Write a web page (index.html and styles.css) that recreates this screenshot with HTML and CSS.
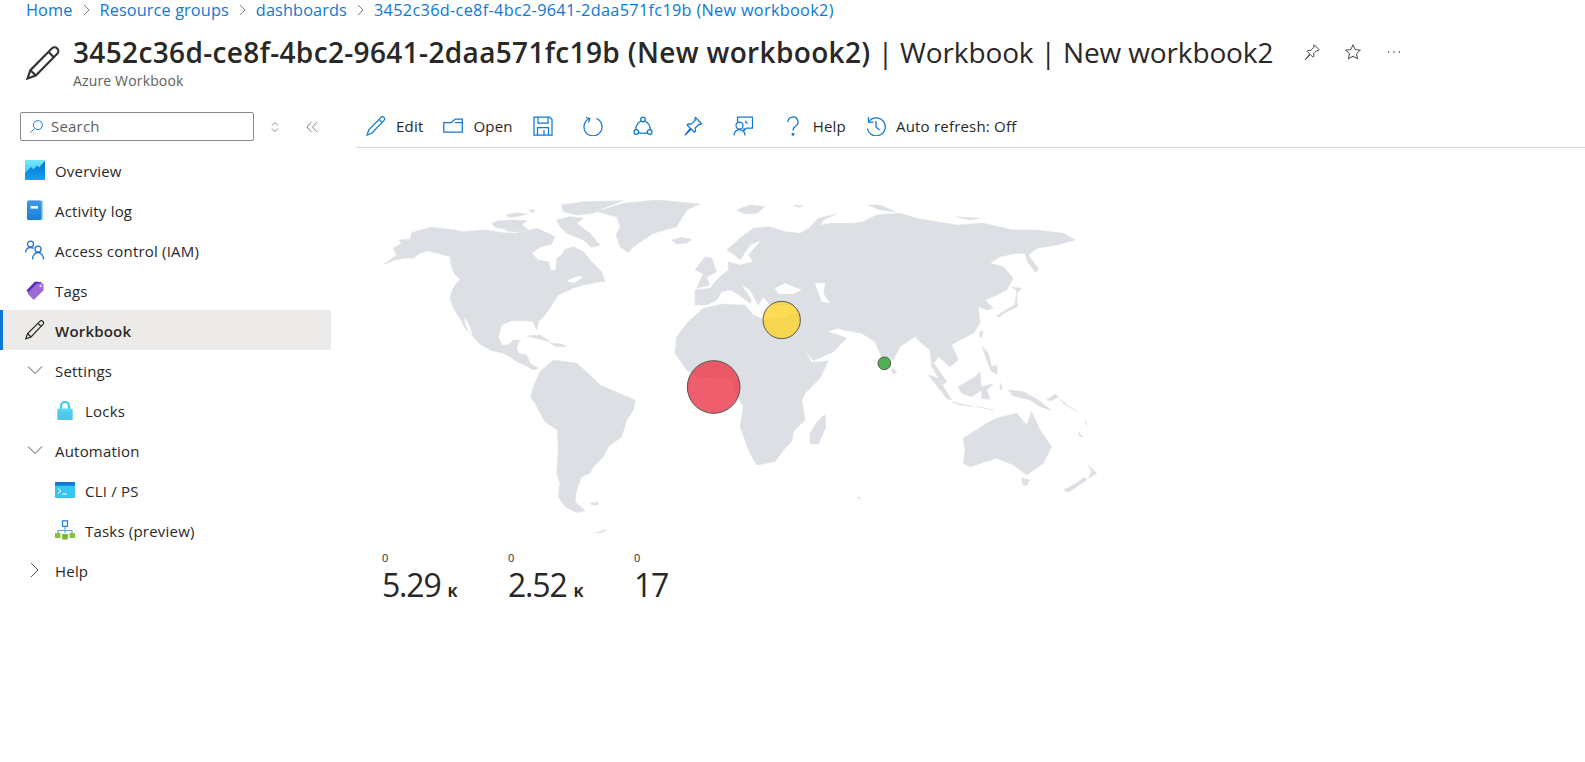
FILE: index.html
```html
<!DOCTYPE html>
<html lang="en">
<head>
  <meta charset="UTF-8">
  <title>New workbook2 | Workbook</title>
  <link rel="stylesheet" href="styles.css">
</head>
<body>

  <!-- Breadcrumb -->
  <div class="crumbs">
    <a>Home</a>
    <svg class="crumb-sep" viewBox="0 0 10 14"><path d="M2 1l6 6-6 6"/></svg>
    <a>Resource groups</a>
    <svg class="crumb-sep" viewBox="0 0 10 14"><path d="M2 1l6 6-6 6"/></svg>
    <a>dashboards</a>
    <svg class="crumb-sep" viewBox="0 0 10 14"><path d="M2 1l6 6-6 6"/></svg>
    <a class="crumb-id">3452c36d-ce8f-4bc2-9641-2daa571fc19b (New workbook2)</a>
  </div>

  <!-- Title -->
  <div class="title-row">
    <svg class="title-icon" viewBox="0 0 20 20"><path d="M14.900 1.900a2.100 2.100 0 0 1 3 3L6 17 1.400 18.600 3 14z"/><path d="M13 3.800l3.100 3.200M3 14l3 3"/></svg>
    <div class="title-text">
      <h1><b>3452c36d-ce8f-4bc2-9641-2daa571fc19b (New workbook2)</b> | Workbook | New workbook2</h1>
      <div class="subtitle">Azure Workbook</div>
    </div>
    <div class="title-actions">
      <svg class="act" viewBox="0 0 20 20"><path d="M12.500 2l5.500 5.500-1 1-1.500-.3-3.600 3.600.2 3-1 1-3-3-5.600 5.700 5-6.300-3-3 1-1 3 .2 3.600-3.600-.3-1.500z"/></svg>
      <svg class="act" viewBox="0 0 20 20"><path d="M10 2l2.400 5.300 5.800.6-4.300 3.900 1.200 5.700-5.100-2.900-5.100 2.900 1.200-5.700-4.300-3.900 5.800-.6z"/></svg>
      <svg class="act act-more" viewBox="0 0 20 20"><circle cx="4" cy="10" r=".8"/><circle cx="10" cy="10" r=".8"/><circle cx="16" cy="10" r=".8"/></svg>
    </div>
  </div>

  <div class="main">

    <!-- Sidebar -->
    <div class="sidebar">
      <div class="search-row">
        <div class="search">
          <svg viewBox="0 0 16 16"><circle cx="9.500" cy="6.500" r="4.800"/><path d="M6 10l-4.500 4.500"/></svg>
          <span>Search</span>
        </div>
        <svg class="updown" viewBox="0 0 10 14"><path d="M2 5.500L5 2.500l3 3M2 8.500l3 3 3-3"/></svg>
        <svg class="collapse" viewBox="0 0 12 12"><path d="M5.500 1L1 6l4.500 5M11 1L6.500 6l4.500 5"/></svg>
      </div>

      <div class="nav">
        <div class="nav-item">
          <svg class="nav-icon" viewBox="0 0 20 20">
            <defs><linearGradient id="ovTop" x1="0" y1="0" x2="0" y2="1"><stop offset="0" stop-color="#74e8fc"/><stop offset="1" stop-color="#30c0f2"/></linearGradient><linearGradient id="ovLow" x1="0" y1="0" x2="0" y2="1"><stop offset="0" stop-color="#0f6fd0"/><stop offset="1" stop-color="#0fa3ee"/></linearGradient></defs>
            <rect width="20" height="20" rx="1" fill="url(#ovTop)"/>
            <path d="M0 13l6-6 2.500 2.500L12 5.500l2 2 6-6.500v18a1 1 0 0 1-1 1H1a1 1 0 0 1-1-1z" fill="url(#ovLow)"/>
          </svg>
          <span>Overview</span>
        </div>
        <div class="nav-item">
          <svg class="nav-icon" viewBox="0 0 20 20">
            <defs><linearGradient id="logFill" x1="0" y1="0" x2="0" y2="1"><stop offset="0" stop-color="#3f9ae6"/><stop offset="1" stop-color="#1a7fd8"/></linearGradient></defs>
            <rect x="2" y="0.500" width="16" height="19.500" rx="1.500" fill="#a8cdf0"/>
            <rect x="2" y="0.500" width="14.500" height="19.500" rx="1.500" fill="url(#logFill)"/>
            <rect x="5.500" y="6" width="7.500" height="2.600" fill="#fff"/>
          </svg>
          <span>Activity log</span>
        </div>
        <div class="nav-item">
          <svg class="nav-icon icon-people" viewBox="0 0 20 20">
            <circle cx="5.500" cy="4.200" r="3"/><path d="M.5 12.500c.4-2.800 2-5 5-5 1.200 0 2.100.3 2.900.9"/>
            <circle cx="13" cy="9.200" r="3"/><path d="M7.500 19.500c0-3.800 2.200-7 5.500-7s5.500 3.200 5.500 7"/>
          </svg>
          <span>Access control (IAM)</span>
        </div>
        <div class="nav-item">
          <svg class="nav-icon" viewBox="0 0 20 20">
            <path d="M1.500 10.500L10 1.500l7 .8L4.500 14.500z" fill="#5e2bc0"/>
            <path d="M3 12.500l9-9h6.500v6.800l-9 9a1 1 0 0 1-1.400 0L3 13.900a1 1 0 0 1 0-1.400z" fill="#9a6bd6"/>
            <circle cx="15.700" cy="6" r="1.200" fill="#e6d8f5"/>
          </svg>
          <span>Tags</span>
        </div>
        <div class="nav-item active">
          <svg class="nav-icon icon-pencil" viewBox="0 0 20 20"><path d="M14.900 1.400a2.100 2.100 0 0 1 3 3L6 17 .8 18.800 2.600 13.500z"/><path d="M13 3.300l3.100 3.200M2.600 13.500L6 17"/></svg>
          <span>Workbook</span>
        </div>
        <div class="nav-item">
          <svg class="nav-icon icon-chev" viewBox="0 0 20 20"><path d="M3 6.500l7 7 7-7"/></svg>
          <span>Settings</span>
        </div>
        <div class="nav-item sub">
          <svg class="nav-icon" viewBox="0 0 20 20">
            <defs><linearGradient id="lockFill" x1="0" y1="0" x2="0" y2="1"><stop offset="0" stop-color="#5fdcfa"/><stop offset="1" stop-color="#2cb3e0"/></linearGradient></defs>
            <path d="M6 10V6a4 4 0 0 1 8 0v4" fill="none" stroke="#3bc9f3" stroke-width="2.200"/>
            <rect x="2.500" y="8.500" width="15" height="11.500" rx="1" fill="url(#lockFill)"/>
            <path d="M2.500 9.500l7.500 6 7.500-6v9.500a1 1 0 0 1-1 1h-13a1 1 0 0 1-1-1z" fill="#5cc8e8" opacity=".7"/>
          </svg>
          <span>Locks</span>
        </div>
        <div class="nav-item">
          <svg class="nav-icon icon-chev" viewBox="0 0 20 20"><path d="M3 6.500l7 7 7-7"/></svg>
          <span>Automation</span>
        </div>
        <div class="nav-item sub">
          <svg class="nav-icon" viewBox="0 0 20 20">
            <rect y="2" width="20" height="16" rx=".8" fill="#35c5ee"/>
            <rect y="2" width="20" height="3.600" fill="#0f78d4"/>
            <path d="M3 8.500l3 2.500-3 2.500" fill="none" stroke="#fff" stroke-width="1"/>
            <path d="M7 14h5" stroke="#fff" stroke-width="1"/>
          </svg>
          <span>CLI / PS</span>
        </div>
        <div class="nav-item sub">
          <svg class="nav-icon" viewBox="0 0 20 20">
            <path d="M10 7v6M3 13v-2.500h14V13M10 10v3" fill="none" stroke="#5aa9e6" stroke-width="1.200"/>
            <rect x="7.500" y=".8" width="5" height="5.500" fill="#fff" stroke="#1f7fd6" stroke-width="1.200"/>
            <rect x="0" y="13" width="5.500" height="5" fill="#86c440"/>
            <rect x="7.200" y="14" width="5.600" height="5.500" fill="#76b82a"/>
            <rect x="14.500" y="13" width="5.500" height="5" fill="#86c440"/>
          </svg>
          <span>Tasks (preview)</span>
        </div>
        <div class="nav-item">
          <svg class="nav-icon icon-chev" viewBox="0 0 20 20"><path d="M6 3l7 7-7 7"/></svg>
          <span>Help</span>
        </div>
      </div>
    </div>

    <!-- Workbook content -->
    <div class="content">
      <div class="toolbar">
        <div class="tool">
          <svg class="tool-svg" viewBox="0 0 20 20"><path d="M15 1.400a2.100 2.100 0 0 1 3 3L6 17 1 19l1.800-5.200z"/><path d="M13 3.400l3 3"/></svg>
          <span>Edit</span>
        </div>
        <div class="tool">
          <svg class="tool-svg" viewBox="0 0 20 20"><path d="M.8 6.500h7.500l4-3.500h7v13H.8z"/><path d="M.8 6.500v-.2M19 6.500h-7.200"/></svg>
          <span>Open</span>
        </div>
        <svg class="tool-svg solo" viewBox="0 0 20 20"><path d="M1 1h15.500L19 3.500V19H1z"/><path d="M5 1v6h10V1M4.500 19v-7.500h11V19M11 14v5"/></svg>
        <svg class="tool-svg solo" viewBox="0 0 20 20"><path d="M6.500 2.500a9 9 0 1 0 7 0"/><path d="M3 1.500l3.800 1-1.200 4"/></svg>
        <svg class="tool-svg solo" viewBox="0 0 20 20"><circle cx="10" cy="3.500" r="2.300"/><circle cx="3.300" cy="16" r="2.300"/><circle cx="16.700" cy="16" r="2.300"/><path d="M8.200 5C5 6.500 2.800 9.500 2.700 13.700M11.800 5c3.200 1.500 5.400 4.500 5.500 8.700M5.600 16.700c2.800 1 6 1 8.800 0"/></svg>
        <svg class="tool-svg solo" viewBox="0 0 20 20"><path d="M12.500 1.500l6 6-1 1-1.500-.3-3.800 3.800.2 3.200-1 1-3.200-3.200-6.200 6.200 5.400-7-3.200-3.200 1-1 3.200.2 3.800-3.800-.3-1.500z"/></svg>
        <svg class="tool-svg solo" viewBox="0 0 20 20"><path d="M4.500 6V1h15v11h-6l-2.500 2.500V12"/><circle cx="6.500" cy="9.500" r="3.500"/><path d="M1 19.500c0-3.300 2.300-6 5.500-6s5.500 2.700 5.500 6"/><path d="M12 5l2.500 2.500"/></svg>
        <div class="tool">
          <svg class="tool-svg" viewBox="0 0 20 20"><path d="M5 6a5 5 0 1 1 7.500 4.300C10.800 11.400 10 12.300 10 14.500"/><circle cx="10" cy="18.300" r=".9"/></svg>
          <span>Help</span>
        </div>
        <div class="tool">
          <svg class="tool-svg" viewBox="0 0 20 20"><path d="M3 5.500a9 9 0 1 1-1.600 7"/><path d="M2.500 1v5h5"/><path d="M10 5v6l3.500 3"/></svg>
          <span>Auto refresh: Off</span>
        </div>
      </div>

      <!-- Map, traced in 3x coordinates -->
      <svg class="map" viewBox="0 0 2220 1080">
        <g class="land">
          <path d="M40 224L75 210 110 203 130 205 150 190 175 182 205 190 240 200 243 225 250 245 265 265 272 268 255 285 245 305 240 325 250 355 270 385 285 415 310 440 330 462 365 482 395 488 420 500 440 515 470 528 490 540 505 535 480 520 470 495 445 490 440 470 450 450 430 450 415 465 395 465 385 440 395 405 425 392 465 392 490 395 500 420 505 395 525 375 545 345 565 315 610 295 640 285 690 275 705 275 695 245 665 215 640 185 610 170 585 178 575 195 560 205 558 240 542 242 535 215 505 210 485 190 510 172 545 162 555 140 530 128 500 115 440 130 400 128 345 120 280 125 240 118 180 112 125 128 120 148 85 150 95 160 70 175 80 195z"/>
          <path d="M365 100L385 92 430 90 470 92 455 105 475 118 450 126 415 124 400 116 375 112zM410 75L440 68 470 72 440 80 415 82zM475 62L495 58 490 68zM560 90L600 80 640 85 620 100 660 130 690 165 665 172 640 150 590 130 570 110zM575 45L640 35 760 32 700 55 670 70 620 75 580 65z"/>
          <path d="M680 65L760 40 860 30 990 42 950 60 920 110 850 130 790 170 775 188 750 170 738 135 750 110 740 80z"/>
          <path d="M905 150L935 142 965 148 950 160 920 162z"/>
          <path d="M470 438L510 435 540 455 500 445zM540 460L575 462 590 470 560 470z"/>
          <path d="M490 590L510 545 550 510 620 520 660 555 690 585 725 600 795 630 790 660 770 690 755 740 715 770 700 800 670 830 660 850 635 860 620 900 615 935 645 962 620 968 585 950 565 920 570 880 560 850 565 780 562 720 525 695 495 640 482 620z"/>
          <path d="M662 940L685 936 684 944 665 945zM675 1030L710 1018 700 1026z"/>
          <path d="M915 490L920 440 955 395 1000 355 1060 342 1105 345 1125 345 1150 375 1185 390 1240 385 1270 372 1285 425 1320 510 1325 518 1375 512 1350 565 1305 610 1295 630 1305 690 1270 725 1265 755 1245 775 1215 815 1160 825 1140 790 1110 710 1120 650 1090 600 1085 570 1060 560 980 562 950 540z"/>
          <path d="M975 240L1005 200 1025 205 1040 245 1010 262 1020 285 980 295 1000 250z"/>
        </g>
        <g class="land" transform="translate(1080 0)">
          <path d="M-105 345L-105 300-60 295-35 265-5 240-5 215 30 225 70 215 55 195 95 150 60 165 30 210 15 195-10 180 30 145 70 115 120 110 165 125 210 130 245 110 300 100 370 100 400 95 440 75 510 70 560 85 620 95 680 105 760 100 850 120 920 120 1000 130 1035 150 980 165 920 175 895 195 925 235 918 248 892 215 885 190 860 190 810 200 780 220 820 230 850 265 830 300 790 320 765 330 790 355 770 360 745 350 750 400 730 430 680 455 665 465 685 510 660 530 625 500 612 520 650 575 640 585 605 530 600 480 575 460 555 440 510 470 490 510 470 505 455 500 435 455 395 430 340 420 325 415 290 425 325 435 350 445 310 485 250 512 240 500 205 435 195 400 200 345 120 345 100 320 85 345 60 300 35 285 65 330 60 340 20 310 0 300-25 305-40 330-70 345z"/>
          <path d="M20 60L60 45 105 50 80 70 45 72zM240 110L265 85 320 72 280 90 265 115zM415 45L450 45 495 65 450 60zM190 45L220 48 205 52zM680 80L750 85 720 90zM330 100L370 105 375 140 350 120z"/>
          <path d="M490 535L500 548 490 552 484 540z"/>
          <path d="M240 760L240 730 258 700 285 673 288 710 265 763z"/>
          <path d="M800 378L830 358 855 345 860 300 845 292 875 295 860 310 862 350 830 365 805 382z"/>
          <path d="M750 425L758 422 755 442 748 440zM757 470L775 490 785 530 800 525 802 552 785 545 770 510z"/>
          <path d="M685 590L735 560 750 545 755 600 725 620 695 610zM595 555L625 565 665 630 650 625zM665 635L730 650 690 645zM755 590L790 582 770 600 780 628 755 625zM740 650L790 660 770 655zM810 578L818 595 810 598zM835 600L880 605 925 630 965 662 930 650 900 630 850 618z"/>
          <path d="M950 630L975 612 985 620 965 632zM990 628L1040 665 1000 640zM1065 690L1072 705 1066 698zM1045 725L1060 742 1048 738z"/>
          <path d="M700 745L770 700 800 685 860 670 890 705 905 665 930 720 965 770 940 820 890 855 850 825 800 805 720 830 700 820 705 780z"/>
          <path d="M875 865L900 870 890 886 878 884zM1000 900L1040 880 1062 862 1070 870 1015 907zM1075 825L1100 850 1075 865 1085 845z"/>
          <path d="M380 922L392 922 388 928z"/>
        </g>
        <g class="sea">
          <path d="M283 380L300 410 308 437 296 425 285 400zM590 272L625 258 640 262 610 280zM605 295L640 290 615 300z"/>
          <path d="M135 295L165 280 215 300 190 312 145 312zM255 280L285 280 280 310 300 340 275 335z" transform="translate(1080 0)"/>
        </g>
        <circle class="bubble red" cx="1031" cy="591" r="79"/>
        <circle class="bubble yellow" cx="1235" cy="390" r="56"/>
        <circle class="bubble green" cx="1543" cy="520" r="19"/>
      </svg>

      <div class="stats">
        <div class="stat"><div class="stat-label">0</div><div class="stat-value">5.29<small>K</small></div></div>
        <div class="stat"><div class="stat-label">0</div><div class="stat-value">2.52<small>K</small></div></div>
        <div class="stat"><div class="stat-label">0</div><div class="stat-value">17</div></div>
      </div>
    </div>
  </div>

</body>
</html>
```
FILE: styles.css
```css
body {
  margin: 0;
  background-color: #fff;
  color: #292827;
  font-family: 'Open Sans', 'Noto Sans', sans-serif;
  font-size: 15px;
  letter-spacing: 0.2px;
  overflow: hidden;
}

svg {
  display: block;
  flex: none;
}

/* Breadcrumb */
.crumbs {
  display: flex;
  align-items: center;
  height: 20px;
  padding-left: 26px;
  gap: 9px;
  color: #0f78d4;
  font-size: 16.300px;
  letter-spacing: 0.120px;
}

.crumb-id {
  letter-spacing: 0.300px;
}

.crumb-sep {
  width: 9px;
  height: 12px;
  fill: none;
  stroke: #666;
}

/* Title */
.title-row {
  display: flex;
  height: 80px;
  padding-left: 25px;
}

.title-icon {
  width: 36px;
  height: 36px;
  margin-top: 25px;
  fill: none;
  stroke: #333;
  stroke-width: 1.200;
}

.title-text {
  margin-left: 12px;
  padding-top: 13px;
}

h1 {
  margin: 0;
  font-size: 28px;
  font-weight: 400;
  line-height: 38px;
  letter-spacing: -0.130px;
  white-space: nowrap;
}

h1 b {
  font-weight: 600;
  letter-spacing: 0.350px;
}

.subtitle {
  font-size: 14px;
  line-height: 18px;
  margin-top: 1px;
  letter-spacing: 0.150px;
  color: #605e5c;
}

.title-actions {
  display: flex;
  gap: 23px;
  margin: 23px 0 0 30px;
}

.act {
  width: 18px;
  height: 18px;
  fill: none;
  stroke: #333;
}

.act-more {
  fill: #333;
  stroke: none;
}

/* Layout */
.main {
  display: flex;
}

.sidebar {
  flex: none;
  width: 331px;
  padding-top: 12px;
}

.search-row {
  display: flex;
  align-items: center;
  padding-left: 20px;
}

.search {
  display: flex;
  align-items: center;
  box-sizing: border-box;
  width: 234px;
  height: 29px;
  padding-left: 8px;
  gap: 7px;
  border: 1px solid #8a8886;
  border-radius: 2px;
  color: #605e5c;
}

.search span {
  margin-top: -2px;
}

.search svg {
  width: 15px;
  height: 15px;
  fill: none;
  stroke: #0f78d4;
}

.updown {
  width: 10px;
  height: 14px;
  margin-left: 16px;
  fill: none;
  stroke: #666;
  stroke-width: 0.800;
}

.collapse {
  width: 12px;
  height: 12px;
  margin-left: 26px;
  fill: none;
  stroke: #666;
  stroke-width: 0.800;
}

.nav {
  margin-top: 9px;
}

.nav-item {
  display: flex;
  align-items: center;
  height: 40px;
  padding-left: 25px;
  gap: 10px;
}

.nav-item span {
  padding-top: 2px;
}

.nav-item.sub {
  padding-left: 55px;
}

.nav-item.active {
  padding-left: 22px;
  border-left: 3px solid #0f78d4;
  background-color: #edebe9;
  font-weight: 600;
}

.nav-icon {
  width: 20px;
  height: 20px;
}

.icon-people {
  fill: none;
  stroke: #2472d8;
  stroke-width: 1.300;
}

.icon-pencil {
  fill: none;
  stroke: #292827;
  stroke-width: 1.200;
}

.icon-chev {
  fill: none;
  stroke: #555;
  stroke-width: 1;
}

/* Workbook content */
.content {
  flex: 1;
  margin-left: 25px;
}

.toolbar {
  display: flex;
  align-items: center;
  box-sizing: border-box;
  height: 48px;
  padding: 5px 0 0 10px;
  gap: 20px;
  border-bottom: 1px solid #d8d8d8;
}

.tool {
  display: flex;
  align-items: center;
  gap: 10px;
}

.tool-svg {
  width: 20px;
  height: 20px;
  fill: none;
  stroke: #0f78d4;
  stroke-width: 1.250;
}

.solo {
  margin-right: 10px;
}

.map {
  width: 740px;
  height: 360px;
  margin: 42px 0 0 14px;
}

.land path {
  fill: #dcdfe3;
  stroke: #dcdfe3;
  stroke-width: 1.500;
  stroke-linejoin: round;
}

.sea path {
  fill: #fff;
}

.bubble {
  stroke: #555;
  stroke-width: 3;
}

.red {
  fill: #ec3a4c;
  fill-opacity: 0.82;
}

.yellow {
  fill: #fdd22a;
  fill-opacity: 0.8;
}

.green {
  fill: #2fa52f;
  fill-opacity: 0.85;
}

.stats {
  display: flex;
  margin-left: 26px;
}

.stat {
  width: 126px;
}

.stat-label {
  font-size: 11px;
  line-height: 15px;
}

.stat-value {
  margin-top: 2px;
  font-size: 32px;
  font-weight: 500;
  line-height: 36px;
  letter-spacing: -1.200px;
}

.stat-value small {
  margin-left: 7px;
  font-size: 15px;
  font-weight: 700;
  letter-spacing: 0;
}
```
